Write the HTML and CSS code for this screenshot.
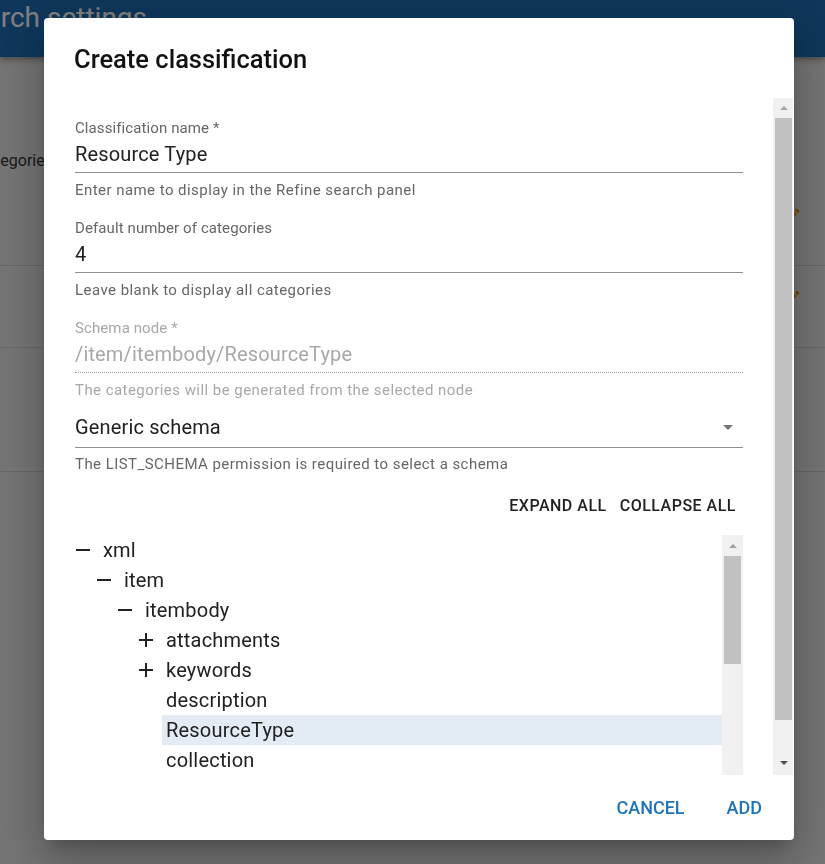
FILE: index.html
```html
<!DOCTYPE html>
<html lang="en">
<head>
<meta charset="utf-8">
<title>Create classification</title>
<link rel="stylesheet" href="styles.css">
</head>
<body>
<div class="page">
  <header class="appbar"><h1 class="page-title">Search settings</h1></header>
  <main class="settings">
    <section class="setting-row row-1">
      <span class="row-text">Categories</span>
      <span class="row-action row-action-1"><svg viewBox="0 0 24 24" width="20" height="20"><path fill="currentColor" d="M3 17.25V21h3.75L17.81 9.94l-3.75-3.75L3 17.25zM20.71 7.04a1 1 0 0 0 0-1.41l-2.34-2.34a1 1 0 0 0-1.41 0l-1.83 1.83 3.75 3.75 1.83-1.83z"/></svg></span>
    </section>
    <section class="setting-row row-2">
      <span class="row-text"></span>
      <span class="row-action row-action-2"><svg viewBox="0 0 24 24" width="20" height="20"><path fill="currentColor" d="M3 17.25V21h3.75L17.81 9.94l-3.75-3.75L3 17.25zM20.71 7.04a1 1 0 0 0 0-1.41l-2.34-2.34a1 1 0 0 0-1.41 0l-1.83 1.83 3.75 3.75 1.83-1.83z"/></svg></span>
    </section>
    <section class="setting-row row-3"></section>
  </main>
</div>

<div class="backdrop"></div>

<div class="dialog" role="dialog" aria-labelledby="dlg-title">
  <h2 class="dialog-title" id="dlg-title">Create classification</h2>
  <div class="dialog-body">
    <div class="dialog-content">
      <div class="field">
        <label class="field-label">Classification name *</label>
        <div class="field-input">Resource Type</div>
        <div class="field-helper">Enter name to display in the Refine search panel</div>
      </div>
      <div class="field">
        <label class="field-label">Default number of categories</label>
        <div class="field-input">4</div>
        <div class="field-helper">Leave blank to display all categories</div>
      </div>
      <div class="field is-disabled">
        <label class="field-label">Schema node *</label>
        <div class="field-input">/item/itembody/ResourceType</div>
        <div class="field-helper">The categories will be generated from the selected node</div>
      </div>
      <div class="field field-select">
        <div class="field-input select-input">
          <span>Generic schema</span>
          <svg class="select-arrow" viewBox="0 0 24 24" width="24" height="24"><path fill="#757575" d="M7 10l5 5 5-5z"/></svg>
        </div>
        <div class="field-helper">The LIST_SCHEMA permission is required to select a schema</div>
      </div>

      <div class="tree-actions">
        <button class="btn-plain">Expand all</button>
        <button class="btn-plain">Collapse all</button>
      </div>

      <div class="tree">
        <ul class="tree-list">
          <li class="tree-row level-0"><span class="tree-toggle"><svg viewBox="0 0 14 14" width="14" height="14"><rect x="0" y="6" width="14" height="2" fill="#212121"/></svg></span><span class="tree-label">xml</span></li>
          <li class="tree-row level-1"><span class="tree-toggle"><svg viewBox="0 0 14 14" width="14" height="14"><rect x="0" y="6" width="14" height="2" fill="#212121"/></svg></span><span class="tree-label">item</span></li>
          <li class="tree-row level-2"><span class="tree-toggle"><svg viewBox="0 0 14 14" width="14" height="14"><rect x="0" y="6" width="14" height="2" fill="#212121"/></svg></span><span class="tree-label">itembody</span></li>
          <li class="tree-row level-3"><span class="tree-toggle"><svg viewBox="0 0 14 14" width="14" height="14"><rect x="0" y="6" width="14" height="2" fill="#212121"/><rect x="6" y="0" width="2" height="14" fill="#212121"/></svg></span><span class="tree-label">attachments</span></li>
          <li class="tree-row level-3"><span class="tree-toggle"><svg viewBox="0 0 14 14" width="14" height="14"><rect x="0" y="6" width="14" height="2" fill="#212121"/><rect x="6" y="0" width="2" height="14" fill="#212121"/></svg></span><span class="tree-label">keywords</span></li>
          <li class="tree-row level-3"><span class="tree-toggle"></span><span class="tree-label">description</span></li>
          <li class="tree-row level-3 is-selected"><span class="tree-toggle"></span><span class="tree-label">ResourceType</span></li>
          <li class="tree-row level-3"><span class="tree-toggle"></span><span class="tree-label">collection</span></li>
          <li class="tree-row level-3"><span class="tree-toggle"></span><span class="tree-label">name</span></li>
          <li class="tree-row level-3"><span class="tree-toggle"></span><span class="tree-label">controls</span></li>
        </ul>
        <div class="tree-scroll" aria-hidden="true">
          <div class="sb-btn sb-btn-tree"><svg viewBox="0 0 8 4" width="8" height="4"><path d="M0 4L4 0L8 4z" fill="#a3a3a3"/></svg></div>
          <div class="sb-thumb sb-thumb-tree"></div>
        </div>
      </div>
    </div>
    <div class="vscroll" aria-hidden="true">
      <div class="sb-btn sb-btn-up"><svg viewBox="0 0 8 4" width="8" height="4"><path d="M0 4L4 0L8 4z" fill="#a3a3a3"/></svg></div>
      <div class="sb-thumb sb-thumb-main"></div>
      <div class="sb-space"></div>
      <div class="sb-btn sb-btn-down"><svg viewBox="0 0 8 4" width="8" height="4"><path d="M0 0L8 0L4 4z" fill="#505050"/></svg></div>
    </div>
  </div>
  <div class="dialog-actions">
    <button class="btn-text">Cancel</button>
    <button class="btn-text">Add</button>
  </div>
</div>
</body>
</html>
```

FILE: styles.css
```css
* { box-sizing: border-box; }

html, body {
  margin: 0;
  height: 100%;
}

body {
  font-family: Roboto, "Noto Sans", "Liberation Sans", sans-serif;
  background: #e8e8e8;
  overflow: hidden;
}

/* ---------- page behind the dialog ---------- */
.page {
  display: flex;
  flex-direction: column;
}

.appbar {
  position: relative;
  z-index: 1;
  height: 57px;
  background: #1c6eb6;
  overflow: hidden;
  box-shadow: 0 2px 4px -1px rgba(0,0,0,.2), 0 4px 5px 0 rgba(0,0,0,.14), 0 1px 10px 0 rgba(0,0,0,.12);
}

.page-title {
  margin: 0 0 0 -46px;
  padding-top: 2px;
  font-size: 28px;
  line-height: 32px;
  font-weight: 400;
  color: #ffffff;
  white-space: nowrap;
}

.settings {
  display: flex;
  flex-direction: column;
}

.setting-row {
  display: flex;
  justify-content: space-between;
  align-items: flex-start;
  padding-right: 23px;
  border-bottom: 1px solid #cccccc;
}

.row-1 { height: 209px; }
.row-2 { height: 82px; }
.row-3 { height: 124px; }

.row-text {
  margin-top: 94px;
  margin-left: -24px;
  font-size: 16px;
  line-height: 20px;
  color: #333333;
}

.row-action {
  display: flex;
  color: #f39200;
}
.row-action-1 { margin-top: 149px; }
.row-action-2 { margin-top: 22px; }

.backdrop {
  position: fixed;
  z-index: 10;
  inset: 0;
  background: rgba(0, 0, 0, 0.5);
}

/* ---------- dialog ---------- */
.dialog {
  position: fixed;
  z-index: 11;
  left: 44px;
  top: 18px;
  width: 750px;
  height: 822px;
  display: flex;
  flex-direction: column;
  background: #ffffff;
  border-radius: 4px;
  box-shadow: 0 11px 15px -7px rgba(0,0,0,.2), 0 24px 38px 3px rgba(0,0,0,.14), 0 9px 46px 8px rgba(0,0,0,.12);
}

.dialog-title {
  margin: 0;
  padding: 25px 31px 23px 30px;
  height: 80px;
  font-size: 25.5px;
  line-height: 32px;
  font-weight: 500;
  color: #111111;
}

.dialog-body {
  flex: 1;
  min-height: 0;
  display: flex;
  padding-right: 1px;
}

.dialog-content {
  flex: 1;
  overflow: hidden;
  padding: 20px 30px 0 31px;
}

/* fields */
.field {
  display: flex;
  flex-direction: column;
}
.field + .field { margin-top: 18px; }
.field.field-select { margin-top: 13px; }

.field-label {
  font-size: 15px;
  line-height: 20px;
  color: #666666;
  letter-spacing: 0.1px;
}

.field-input {
  margin-top: 2px;
  padding-bottom: 4px;
  font-size: 20px;
  line-height: 28px;
  color: #212121;
  letter-spacing: 0.15px;
  border-bottom: 1px solid #8f8f8f;
}

.field-helper {
  margin-top: 7px;
  font-size: 15px;
  line-height: 20px;
  color: #666666;
  letter-spacing: 0.45px;
}

.is-disabled .field-label,
.is-disabled .field-input,
.is-disabled .field-helper {
  color: #a8a8a8;
}
.is-disabled .field-input {
  border-bottom: 1px dotted #9a9a9a;
}

.select-input {
  margin-top: 0;
  padding-bottom: 6px;
  display: flex;
  justify-content: space-between;
  align-items: center;
}
.field-select .field-helper { margin-top: 6px; }

.select-arrow {
  margin-right: 3px;
}

/* tree toolbar */
.tree-actions {
  display: flex;
  justify-content: flex-end;
  gap: 1px;
  margin-top: 22px;
  padding-right: 1px;
}

.btn-plain {
  border: 0;
  background: none;
  padding: 0 6px;
  font-family: inherit;
  font-size: 16px;
  line-height: 20px;
  font-weight: 500;
  letter-spacing: 0.5px;
  text-transform: uppercase;
  color: #212121;
}

/* tree */
.tree {
  margin-top: 19px;
  height: 300px;
  display: flex;
}

.tree-list {
  flex: 1;
  list-style: none;
  margin: 0;
  padding: 0;
  overflow: hidden;
}

.tree-row {
  display: flex;
  align-items: center;
  height: 30px;
}
.level-0 { padding-left: 0; }
.level-1 { padding-left: 21px; }
.level-2 { padding-left: 42px; }
.level-3 { padding-left: 63px; }

.tree-toggle {
  flex: none;
  width: 16px;
  height: 30px;
  display: flex;
  align-items: center;
  justify-content: center;
}

.tree-label {
  flex: 1;
  margin-left: 8px;
  padding: 0 4px;
  font-size: 20px;
  line-height: 30px;
  letter-spacing: 0.2px;
  color: #212121;
}

.is-selected .tree-label {
  background: #e3ecf5;
}

/* scrollbars */
.tree-scroll {
  flex: none;
  width: 21px;
  padding: 0 2px;
  background: #f1f1f1;
  display: flex;
  flex-direction: column;
}

.vscroll {
  flex: none;
  width: 20px;
  padding: 0 1px 0 2px;
  background: #f1f1f1;
  display: flex;
  flex-direction: column;
}

.sb-btn {
  flex: none;
  display: flex;
  align-items: center;
  justify-content: center;
}
.sb-btn-up { height: 20px; }
.sb-btn-down { height: 24px; }
.sb-btn-tree { height: 21px; }

.sb-thumb {
  flex: none;
  background: #c1c1c1;
}
.sb-thumb-main { height: 602px; }
.sb-thumb-tree { height: 108px; }

.sb-space { flex: 1; }

/* actions */
.dialog-actions {
  flex: none;
  height: 65px;
  display: flex;
  justify-content: flex-end;
  align-items: flex-start;
  gap: 42px;
  padding: 21px 32px 0 0;
}

.btn-text {
  border: 0;
  background: none;
  padding: 0;
  font-family: inherit;
  font-size: 18px;
  line-height: 24px;
  font-weight: 500;
  text-transform: uppercase;
  color: #1f74b9;
}
```
